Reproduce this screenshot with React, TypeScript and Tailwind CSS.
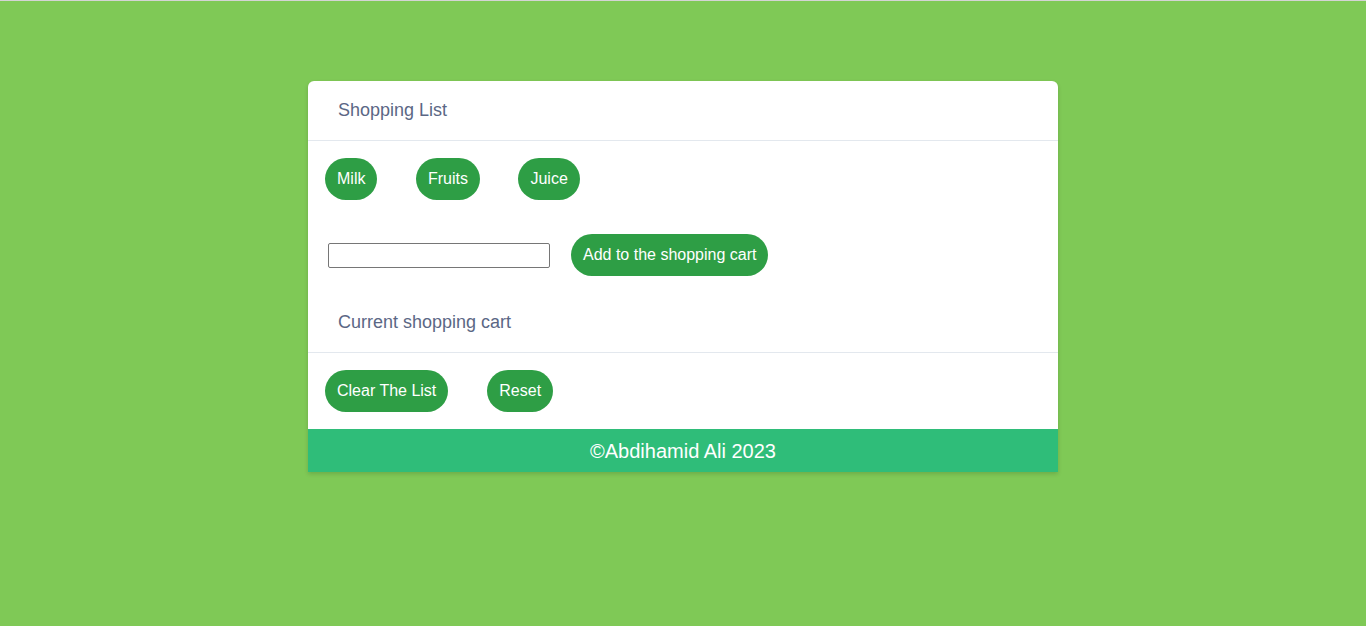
const items = ["Milk", "Fruits", "Juice"];

function Pill({ label }: { label: string }) {
  return (
    <button className="h-[42px] px-3 rounded-full bg-[#2e9e45] text-white text-[16px] leading-none">
      {label}
    </button>
  );
}

export default function App() {
  return (
    <div
      className="min-h-[626px] bg-[#7fc956] border-t border-[#d4d4d4] pt-[80px]"
      style={{ fontFamily: '"Liberation Sans", Arial, sans-serif' }}
    >
      <div className="w-[750px] mx-auto bg-white rounded-t-md shadow-[0_2px_4px_rgba(0,0,0,0.15)]">
        <div className="h-[60px] flex items-center pl-[30px] border-b border-[#e3e8ee] text-[18px] text-[#5b6785]">
          Shopping List
        </div>

        <div className="flex gap-[38.5px] px-[17px] pt-[17px]">
          {items.map(i => <Pill key={i} label={i} />)}
        </div>

        <div className="flex items-center gap-[21px] pl-[20px] pt-[34px]">
          <input type="text" className="w-[222px] h-[25px] border border-[#767676] rounded-[2px]" />
          <Pill label="Add to the shopping cart" />
        </div>

        <div className="mt-[17px] h-[60px] flex items-center pl-[30px] border-b border-[#e3e8ee] text-[18px] text-[#5b6785]">
          Current shopping cart
        </div>

        <div className="flex gap-[39px] px-[17px] py-[17px]">
          <Pill label="Clear The List" />
          <Pill label="Reset" />
        </div>

        <div className="h-[43px] bg-[#2fbd79] flex items-center justify-center text-white text-[20px]">
          ©Abdihamid Ali 2023
        </div>
      </div>
    </div>
  );
}
